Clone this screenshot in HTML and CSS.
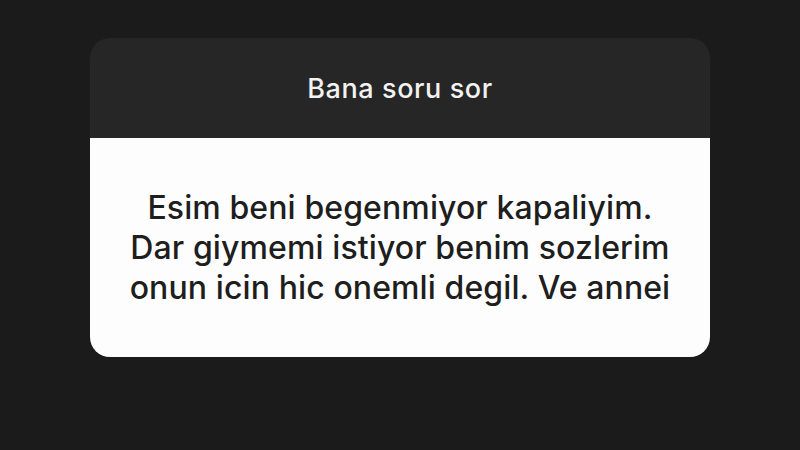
FILE: index.html
```html
<!DOCTYPE html>
<html lang="tr">
<head>
<meta charset="utf-8">
<link rel="stylesheet" href="styles.css">
</head>
<body>
<div class="card">
  <div class="card-head">Bana soru sor</div>
  <div class="card-body">
    <p class="question">Esim beni begenmiyor kapaliyim.<br>Dar giymemi istiyor benim sozlerim<br>onun icin hic onemli degil. Ve annei</p>
  </div>
</div>
</body>
</html>
```
FILE: styles.css
```css
html, body {
  margin: 0;
  padding: 0;
}
body {
  width: 800px;
  height: 450px;
  background: #1b1b1b;
  font-family: Inter, "Liberation Sans", Arial, sans-serif;
  overflow: hidden;
}
.card {
  width: 620px;
  margin: 38px 0 0 90px;
  border-radius: 20px;
  overflow: hidden;
}
.card-head {
  height: 100px;
  background: #262626;
  color: #f2f2f2;
  font-size: 27px;
  font-weight: 500;
  display: flex;
  align-items: center;
  justify-content: center;
  letter-spacing: 0.6px;
}
.card-body {
  height: 219px;
  background: #fdfdfd;
  display: flex;
  align-items: center;
  justify-content: center;
}
.question {
  margin: 0;
  text-align: center;
  color: #1e1e1e;
  font-size: 32px;
  font-weight: 500;
  line-height: 40px;
  letter-spacing: 0.1px;
}
```
